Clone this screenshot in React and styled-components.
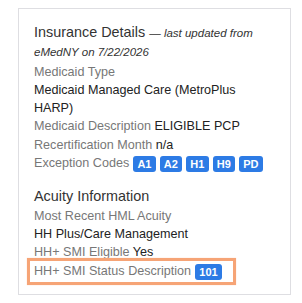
import React from 'react'
import styled, { createGlobalStyle, css } from 'styled-components'

const GlobalStyle = createGlobalStyle`
  body {
    margin: 0;
    background: #fff;
    font-family: 'Liberation Sans', Arial, sans-serif;
  }
`

const Page = styled.div`
  padding: 8px 11px 0 18px;
`

const Card = styled.div`
  box-sizing: border-box;
  width: 273px;
  border: 1px solid #dedee2;
  padding: 14px 15px 14px 15px;
  color: #222;
  font-size: 12.6px;
  line-height: 18.3px;
`

const Section = styled.div`
  & + & {
    margin-top: 15px;
  }
`

const SectionTitle = styled.div`
  font-size: 14.4px;
  line-height: 18.3px;
  color: #333;
  margin-bottom: 1px;
`

const Updated = styled.span`
  font-size: 11.5px;
  font-style: italic;
  color: #333;
`

const Row = styled.div`
  ${props => props.highlighted && css`
    position: relative;
    width: fit-content;

    &::after {
      content: '';
      position: absolute;
      top: -4px;
      bottom: -5px;
      left: -7px;
      right: -14px;
      border: 3px solid #f6a476;
      box-shadow: 0 0 1px #fbcfb6;
      pointer-events: none;
    }
  `}
`

const Label = styled.span`
  color: #777;
`

const Value = styled.span`
  color: #222;
`

const Badge = styled.span`
  display: inline-block;
  margin-left: 4px;
  padding: 2px 4.2px;
  font-size: 11px;
  font-weight: bold;
  line-height: 12px;
  color: #fff;
  background: #2d7be5;
  border-radius: 3px;
  vertical-align: -1px;
  white-space: nowrap;
`

const exceptionCodes = ['A1', 'A2', 'H1', 'H9', 'PD']

export default function App () {
  return (
    <Page>
      <GlobalStyle />
      <Card>
        <Section>
          <SectionTitle>
            Insurance Details <Updated>— last updated from eMedNY on 7/22/2026</Updated>
          </SectionTitle>
          <Row><Label>Medicaid Type</Label></Row>
          <Row><Value>Medicaid Managed Care (MetroPlus HARP)</Value></Row>
          <Row><Label>Medicaid Description</Label> <Value>ELIGIBLE PCP</Value></Row>
          <Row><Label>Recertification Month</Label> <Value>n/a</Value></Row>
          <Row>
            <Label>Exception Codes</Label>
            {exceptionCodes.map(code => <Badge key={code}>{code}</Badge>)}
          </Row>
        </Section>

        <Section>
          <SectionTitle>Acuity Information</SectionTitle>
          <Row><Label>Most Recent HML Acuity</Label></Row>
          <Row><Value>HH Plus/Care Management</Value></Row>
          <Row><Label>HH+ SMI Eligible</Label> <Value>Yes</Value></Row>
          <Row highlighted>
            <Label>HH+ SMI Status Description</Label><Badge>101</Badge>
          </Row>
        </Section>
      </Card>
    </Page>
  )
}
